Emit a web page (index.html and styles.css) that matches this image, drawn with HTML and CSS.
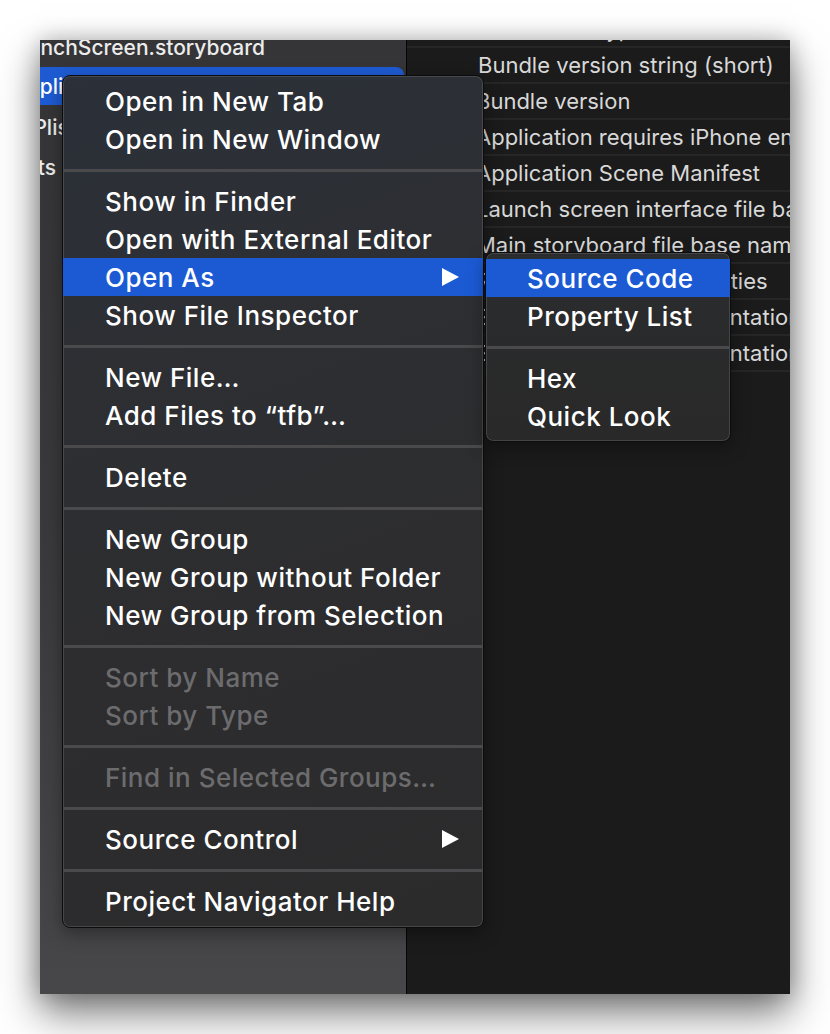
FILE: index.html
```html
<!DOCTYPE html>
<html>
<head>
<meta charset="utf-8">
<link rel="stylesheet" href="styles.css">
</head>
<body>
<div class="window">
  <div class="sidebar">
    <div class="side-list">
      <div class="side-row"><span class="side-text t1">LaunchScreen.storyboard</span></div>
      <div class="side-row selected"><span class="side-text t2">Info.plist</span></div>
      <div class="side-row"><span class="side-text t3">GoogleService-Info.Plist</span></div>
      <div class="side-row"><span class="side-text t4">Assets</span></div>
    </div>
  </div>
  <div class="divider"></div>
  <div class="editor">
    <div class="plist">
      <div class="prow"><div class="cell first"><span>Bundle OS Type code</span></div></div>
      <div class="prow"><div class="cell first"><span>Bundle version string (short)</span></div></div>
      <div class="prow"><div class="cell"><span>Bundle version</span></div></div>
      <div class="prow"><div class="cell"><span>Application requires iPhone environment</span></div></div>
      <div class="prow"><div class="cell"><span>Application Scene Manifest</span></div></div>
      <div class="prow"><div class="cell"><span>Launch screen interface file base name</span></div></div>
      <div class="prow"><div class="cell"><span>Main storyboard file base name</span></div></div>
      <div class="prow"><div class="cell"><span>Required device capabilities</span></div></div>
      <div class="prow"><div class="cell"><span>Supported interface orientations</span></div></div>
      <div class="prow"><div class="cell"><span>Supported interface orientations (iPad)</span></div></div>
    </div>
  </div>

  <div class="menu main-menu">
    <div class="item">Open in New Tab</div>
    <div class="item">Open in New Window</div>
    <div class="sep"></div>
    <div class="item">Show in Finder</div>
    <div class="item">Open with External Editor</div>
    <div class="item active has-sub">Open As<svg class="arrow" width="17" height="18" viewBox="0 0 17 18"><polygon points="0,0 17,9 0,18" fill="#fff"/></svg></div>
    <div class="item">Show File Inspector</div>
    <div class="sep"></div>
    <div class="item">New File…</div>
    <div class="item">Add Files to “tfb”…</div>
    <div class="sep"></div>
    <div class="item">Delete</div>
    <div class="sep"></div>
    <div class="item">New Group</div>
    <div class="item">New Group without Folder</div>
    <div class="item">New Group from Selection</div>
    <div class="sep"></div>
    <div class="item disabled">Sort by Name</div>
    <div class="item disabled">Sort by Type</div>
    <div class="sep"></div>
    <div class="item disabled">Find in Selected Groups…</div>
    <div class="sep"></div>
    <div class="item has-sub">Source Control<svg class="arrow" width="17" height="18" viewBox="0 0 17 18"><polygon points="0,0 17,9 0,18" fill="#fff"/></svg></div>
    <div class="sep"></div>
    <div class="item">Project Navigator Help</div>
  </div>

  <div class="menu sub-menu">
    <div class="item active">Source Code</div>
    <div class="item">Property List</div>
    <div class="sep"></div>
    <div class="item">Hex</div>
    <div class="item">Quick Look</div>
  </div>
</div>
</body>
</html>
```
FILE: styles.css
```css
html, body {
  margin: 0;
  padding: 0;
  background: #ffffff;
}

body {
  width: 830px;
  height: 1034px;
  overflow: hidden;
  font-family: "Inter", "Liberation Sans", sans-serif;
}

.window {
  position: relative;
  margin: 40px 0 0 40px;
  width: 750px;
  height: 954px;
  display: flex;
  box-shadow: 0 20px 38px rgba(0, 0, 0, 0.5), 0 0 22px rgba(0, 0, 0, 0.25);
}

.sidebar {
  width: 366px;
  background: linear-gradient(180deg, #353537 0%, #39393b 50%, #474749 100%);
  overflow: hidden;
}

.side-list {
  margin-top: -13px;
}

.side-row {
  height: 40px;
  display: flex;
  align-items: center;
  color: #ececec;
  font-size: 21px;
  font-weight: 500;
  white-space: nowrap;
  overflow: hidden;
}

.side-row.selected {
  height: 38px;
  margin-bottom: 2px;
  background: #1e5bd3;
  border-radius: 0 8px 8px 0;
  margin-right: 2px;
  color: #fff;
}

.t1 { margin-left: -36px; }
.t2 { margin-left: -45px; }
.t3 { margin-left: -209px; }
.t4 { margin-left: -52px; }

.divider {
  width: 1px;
  background: #050505;
}

.editor {
  flex: 1;
  background: #1b1b1b;
  overflow: hidden;
}

.plist {
  margin-top: -28px;
}

.prow {
  height: 34px;
  border-bottom: 2px solid #262626;
  display: flex;
  align-items: center;
  white-space: nowrap;
  color: #d8d8d8;
  font-size: 22px;
}

.cell {
  margin-left: 74px;
  overflow: hidden;
  flex: 1;
}

.cell span {
  display: inline-block;
  margin-left: -5px;
}

.cell.first {
  margin-left: 71px;
}

.cell.first span {
  margin-left: 0;
}

.menu {
  position: absolute;
  box-sizing: border-box;
  border: 1px solid #0c0c0c;
  border-radius: 8px;
  padding: 6px 0 7px;
  color: #ffffff;
  font-size: 26px;
  font-weight: 500;
  letter-spacing: 0.5px;
  box-shadow: inset 0 0 0 1px rgba(255, 255, 255, 0.13), 0 6px 18px rgba(0, 0, 0, 0.35);
  overflow: hidden;
}

.main-menu {
  left: 22px;
  top: 35px;
  width: 422px;
  height: 853px;
  background: linear-gradient(160deg, #2b3039 0%, #2d2f33 30%, #2d2d2f 60%, #2b2b2c 100%);
}

.sub-menu {
  left: 445px;
  top: 212px;
  width: 246px;
  height: 190px;
  background: linear-gradient(180deg, #2b2c2e 0%, #292929 100%);
}

.item {
  height: 38px;
  display: flex;
  align-items: center;
  padding-left: 42px;
  padding-right: 24px;
  white-space: nowrap;
}

.sub-menu .item {
  padding-left: 41px;
}

.item.active {
  background: #1c5ad4;
}

.item.disabled {
  color: #6c6c6e;
}

.item.has-sub {
  justify-content: space-between;
}

.sep {
  height: 24px;
  display: flex;
  align-items: center;
}

.sep::before {
  content: "";
  display: block;
  width: 100%;
  height: 3px;
  background: #4a4a4c;
}
```
